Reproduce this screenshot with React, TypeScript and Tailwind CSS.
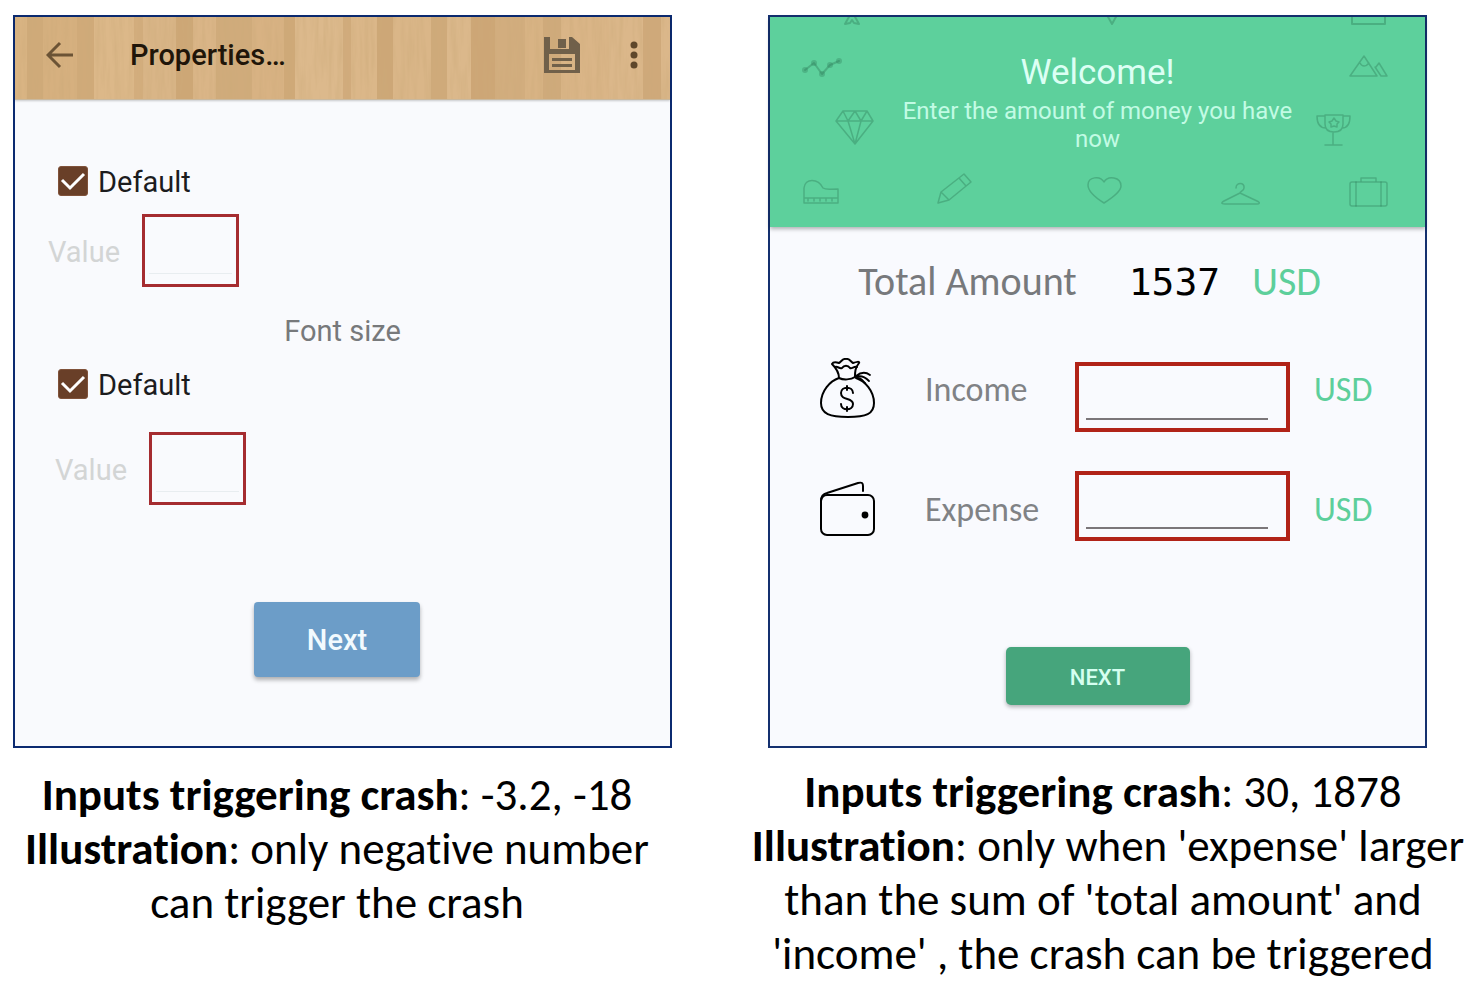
import { useId, type ReactNode } from "react";

const caption =
  "text-center font-[Carlito,Lato,sans-serif] text-[45px] leading-[54px] text-black [font-variant-ligatures:none]";

const planks: [number, number, string][] = [
  [0, 12, "#d9b483"],
  [12, 16, "#cfaa79"],
  [28, 34, "#d6b07f"],
  [62, 17, "#d0aa79"],
  [79, 40, "#dcb889"],
  [119, 9, "#d3ad7d"],
  [128, 33, "#d9b587"],
  [161, 17, "#cda776"],
  [178, 23, "#dab587"],
  [201, 36, "#d0ab7b"],
  [237, 32, "#d8b283"],
  [269, 11, "#cfa978"],
  [280, 48, "#dcb98c"],
  [328, 8, "#d1ab7c"],
  [336, 26, "#dbb789"],
  [362, 16, "#cda777"],
  [378, 38, "#dab688"],
  [416, 16, "#cfaa7a"],
  [432, 24, "#dbb88b"],
  [456, 24, "#cda676"],
  [480, 30, "#d2ad7e"],
  [510, 18, "#d8b384"],
  [528, 18, "#cfaa7b"],
  [546, 48, "#dab587"],
  [594, 34, "#dbb78a"],
  [628, 18, "#cfa97a"],
  [646, 12, "#dbb78a"],
];

function Wood() {
  return (
    <svg className="absolute inset-0 h-full w-full" viewBox="0 0 655 82" preserveAspectRatio="none" aria-hidden="true">
      <defs>
        <filter id="grain" x="0" y="0" width="100%" height="100%">
          <feTurbulence type="fractalNoise" baseFrequency="0.22 0.018" numOctaves="3" seed="7" />
          <feColorMatrix values="0 0 0 0 0.6  0 0 0 0 0.4  0 0 0 0 0.19  0.9 0 0 0 -0.33" />
        </filter>
      </defs>
      {planks.map(([x, w, fill]) => (
        <rect key={x} x={x} y="0" width={w + 1} height="82" fill={fill} />
      ))}
      <rect width="655" height="82" filter="url(#grain)" />
    </svg>
  );
}

function HeaderDoodles() {
  return (
    <svg
      className="absolute inset-0 h-full w-full"
      viewBox="770 17 655 210"
      preserveAspectRatio="xMidYMin slice"
      fill="none"
      stroke="#2f7d5b"
      strokeOpacity="0.4"
      strokeWidth="2"
      strokeLinejoin="round"
      strokeLinecap="round"
      aria-hidden="true"
    >
      <path d="M850 15l-5 9 5-1 2-3 2 3 5 1-5-9" />
      <path d="M1107 15l5 9 5-9M1352 15v9h33v-9" />
      <path d="M805 70l9-7 8 11 8-9 9-4" />
      <g fill="#2f7d5b" fillOpacity="0.34" stroke="none">
        <circle cx="805" cy="70" r="3" />
        <circle cx="814" cy="63" r="3" />
        <circle cx="822" cy="74" r="3" />
        <circle cx="830" cy="65" r="3" />
        <circle cx="839" cy="61" r="3" />
      </g>
      <path d="M843 111h24l6 10-18 23-19-23zM836 121h37M843 111l5 10 7 23 6-23 6-10M848 121l7-10 6 10" strokeWidth="1.5" />
      <path d="M804 203v-15c1-10 14-10 19 0 3 2 5 1 15 1v14zM804 198h34M808 199v2M814 199v2M820 199v2M826 199v2M832 199v2" strokeWidth="1.5" />
      <path d="M938 203l3-11 23-18 7 8-22 18zM941 192l8 8M959 178l7 8" strokeWidth="1.5" />
      <path d="M1104 203c-8-5-16-12-16-18 0-8 12-10 16-3 4-7 17-5 17 4 0 6-9 12-17 17z" strokeWidth="1.5" />
      <path d="M1236 188c0-6 9-6 8 0 0 3-4 3-4 5l17 8c4 2 2 3 0 3h-32c-5 0-3-2-1-3l16-8" strokeWidth="1.5" />
      <path d="M1350 76l14-20 13 20zM1360 63c2 4 6 4 9 0M1376 67l3-4 8 13h-6l-6-9" strokeWidth="1.5" />
      <path d="M1325 115h18v9c0 7-5 8-9 8s-9-1-9-8zM1325 116h-8c0 8 3 12 9 12M1343 116h7c0 8-3 12-8 12M1333 132v12M1325 145h17M1334 118l2 3 3 1-2 2v3l-3-1-3 1v-3l-2-2 3-1z" strokeWidth="1.5" />
      <rect x="1350" y="182" width="37" height="24" rx="2" strokeWidth="1.5" />
      <path d="M1356 182v24M1381 182v24M1361 181v-3h15v3" strokeWidth="1.5" />
    </svg>
  );
}

function MoneyBag() {
  return (
    <svg className="h-[62px] w-14 shrink-0" viewBox="0 0 56 62" fill="none" stroke="#000" strokeWidth="2" strokeLinecap="round" strokeLinejoin="round" aria-hidden="true">
      <path d="M19 20C10 23 1 33 1 45c0 11 9 14 27 14s26-3 26-14c0-12-9-22-18-25" />
      <path d="M19 20c0-5-2-9-7-14 1-2 4-2 7-1 2-1 4-5 7-4 3-1 5 3 7 4 3-1 7-2 6 0-4 5-4 9-4 14-4 3-12 3-16 1z" />
      <path d="M15 9c3-1 4 2 7 1 2-3 6-3 8 0 2 1 4-2 7-1" />
      <path d="M36 18c5-4 10-4 14-1M36 19c5-2 9 0 13 4M38 20c3 0 5 3 7 5" strokeWidth="1.8" />
      <path d="M33 35c0-7-12-7-12 0 0 8 12 4 12 11 0 7-12 7-12 0M27 28v4M27 49v4" />
    </svg>
  );
}

function Wallet() {
  return (
    <svg className="h-14 w-14 shrink-0" viewBox="0 0 56 56" fill="none" stroke="#000" strokeWidth="2" strokeLinecap="round" strokeLinejoin="round" aria-hidden="true">
      <rect x="1" y="14" width="53" height="40" rx="6" />
      <path d="M1 20c0-5 2-7 6-8L38 2c4-1 5 0 5 3v5" />
      <circle cx="45" cy="34" r="2.4" fill="#000" />
    </svg>
  );
}

function DefaultOption({ className }: { className: string }) {
  const id = useId();
  return (
    <div className={`flex h-9 items-center gap-[10px] pl-[43px] ${className}`}>
      <span className="relative size-[30px]">
        <input id={id} type="checkbox" defaultChecked className="peer block size-full appearance-none rounded-[3px] border border-[#80523a] bg-[#693f28]" />
        <svg className="pointer-events-none absolute inset-0 hidden size-full peer-checked:block" viewBox="0 0 30 30" fill="none" stroke="#fff" strokeWidth="3" aria-hidden="true">
          <path d="M4 14l8 8L26 8" />
        </svg>
      </span>
      <label htmlFor={id} className="pt-[2px] text-[29px] leading-9 text-[#1c1c1e]">
        Default
      </label>
    </div>
  );
}

function ValueField({ className }: { className: string }) {
  const id = useId();
  return (
    <div className={`flex items-center gap-6 ${className}`}>
      <label htmlFor={id} className="w-[70px] pt-[2px] text-[29px] leading-9 text-[#d3d5d5]">
        Value
      </label>
      <div className="flex h-[73px] w-[97px] items-end border-3 border-[#a52c30] px-1 pb-[10px]">
        <input id={id} type="text" className="h-10 w-full border-b border-[#e8edf0] bg-transparent text-2xl outline-none" />
      </div>
    </div>
  );
}

function MoneyRow({ icon, name, boxClass }: { icon: ReactNode; name: string; boxClass: string }) {
  const id = useId();
  return (
    <div className="flex h-[120px] items-center justify-center pr-1">
      {icon}
      <label htmlFor={id} className="ml-[49px] w-[150px] pt-[2px] text-[34px] leading-9 text-[#808285]">
        {name}
      </label>
      <div className={boxClass}>
        <div className="flex h-[70px] w-[215px] items-end border-4 border-[#b12318] pr-[18px] pb-2 pl-[7px]">
          <input id={id} type="text" className="h-11 w-full border-b-2 border-[#7b7679] bg-transparent text-[34px] outline-none" />
        </div>
      </div>
      <span className="ml-6 w-[57px] pt-[2px] text-[34px] leading-9 text-[#5dcf9b]">USD</span>
    </div>
  );
}

export default function App() {
  return (
    <main className="grid min-h-screen grid-cols-[674fr_740fr] items-start gap-x-16 bg-white pt-[15px]">
      <section>
        <div className="mr-[2px] ml-[13px] border-2 border-[#0b2a70] bg-[#f9fafd] pb-[69px] font-[Roboto,sans-serif]">
          <header className="relative flex h-[83px] items-center border-b border-[#c9b99f] pb-[6px] shadow-[0_1px_2px_rgba(0,0,0,0.2)]">
            <Wood />
            <button type="button" aria-label="Back" className="relative ml-[31px]">
              <svg className="h-7 w-7" viewBox="0 0 28 28" fill="none" stroke="#6b5335" strokeWidth="3" aria-hidden="true">
                <path d="M27 14H3M14 2L2 14l12 12" />
              </svg>
            </button>
            <h1 className="relative ml-14 text-[29px] leading-9 font-medium text-[#201509]">Properties…</h1>
            <button type="button" aria-label="Save" className="relative ml-auto">
              <svg className="h-9 w-9" viewBox="0 0 36 36" fill="#70604a" aria-hidden="true">
                <path fillRule="evenodd" d="M0 0h6v12h19V0h3l8 7v29H0zM5 17v16h26V17z" />
                <path d="M14 2h8v9h-8zM8 21h20v3H8zM8 27h20v3H8z" />
              </svg>
            </button>
            <button type="button" aria-label="More options" className="relative mr-[30px] ml-12">
              <svg className="h-7 w-3" viewBox="0 0 12 28" fill="#5e472b" aria-hidden="true">
                <circle cx="6" cy="4" r="3.5" />
                <circle cx="6" cy="14" r="3.5" />
                <circle cx="6" cy="24" r="3.5" />
              </svg>
            </button>
          </header>
          <DefaultOption className="mt-[63px]" />
          <ValueField className="mt-[15px] pl-[33px]" />
          <h2 className="mt-[26px] text-center text-[29px] leading-9 text-[#77797b]">Font size</h2>
          <DefaultOption className="mt-[17px]" />
          <ValueField className="mt-[30px] pl-10" />
          <div className="mt-[97px] flex justify-center pr-[11px]">
            <button type="button" className="h-[75px] w-[166px] rounded-[4px] bg-[#6c9dc8] pt-[2px] text-[29px] font-medium text-[#f2fafe] shadow-[0_3px_4px_rgba(0,0,0,0.3)]">
              Next
            </button>
          </div>
        </div>
        <p className={`mt-5 ${caption}`}>
          <b>Inputs triggering crash</b>: -3.2, -18
          <br />
          <b>Illustration</b>: only negative number
          <br />
          can trigger the crash
        </p>
      </section>

      <section>
        <div className="mr-[51px] ml-[30px] border-2 border-[#14306f] bg-[#f9fafe] pb-[41px] font-[Carlito,Lato,sans-serif]">
          <header className="relative h-[210px] bg-[#5dd09c] pt-8 text-center font-[Roboto,sans-serif] shadow-[0_2px_4px_rgba(0,0,0,0.3)]">
            <HeaderDoodles />
            <h1 className="relative text-[35px] leading-[48px] text-[#dcfff4]">Welcome!</h1>
            <p className="relative mx-auto w-[400px] text-2xl leading-7 text-[#c2fbe4]">Enter the amount of money you have now</p>
          </header>
          <div className="mt-[31px] flex h-12 items-center justify-center pr-4 text-[40px] leading-[48px]">
            <span className="text-[#77797c]">Total Amount</span>
            <output className="ml-[52px] font-['DejaVu_Sans_Mono',monospace] text-[38px] text-black">1537</output>
            <span className="ml-8 text-[#5dcf9b]">USD</span>
          </div>
          <div className="mt-[23px]">
            <MoneyRow icon={<MoneyBag />} name="Income" boxClass="pt-4" />
            <MoneyRow icon={<Wallet />} name="Expense" boxClass="pb-[6px]" />
          </div>
          <button type="button" className="mx-auto mt-[78px] block h-[58px] w-[184px] rounded-[5px] bg-[#46a57c] pt-[2px] font-[Roboto,sans-serif] text-[22px] font-medium text-[#d5fff0] shadow-[0_2px_4px_rgba(0,0,0,0.3)]">
            NEXT
          </button>
        </div>
        <p className={`mt-[17px] ${caption}`}>
          <b>Inputs triggering crash</b>: 30, 1878&nbsp;
          <br />
          <b>Illustration</b>: only when 'expense' larger
          <br />
          than the sum of 'total amount' and&nbsp;
          <br />
          'income' , the crash can be triggered&nbsp;
        </p>
      </section>
    </main>
  );
}
